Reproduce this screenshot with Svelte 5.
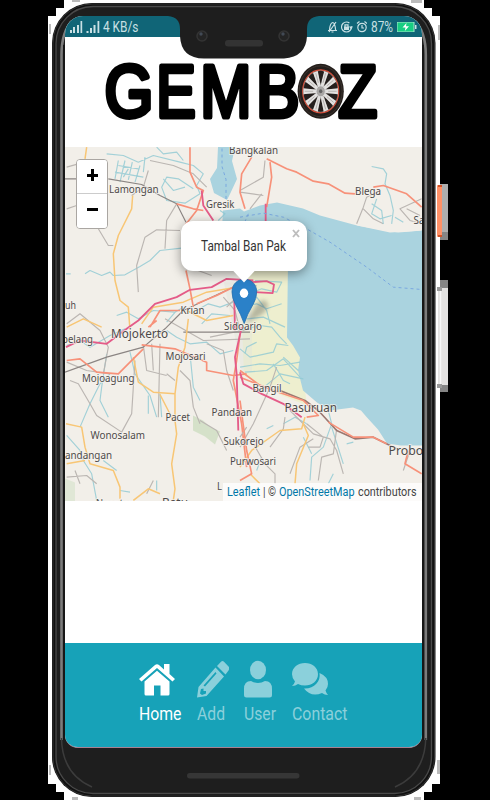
<script>
  const places = [
    ['Bangkalan', 229, 153.5, 49, 10.5], ['Lamongan', 109, 192, 49.5, 11], ['Gresik', 206, 207, 28.5, 11],
    ['Blega', 355, 194.5, 26, 11], ['Sampang', 413.5, 223, 44, 11], ['uh', 65, 308, 11, 11],
    ['Krian', 180.5, 313, 24, 11], ['Sidoarjo', 224, 329.2, 38, 11], ['Mojokerto', 111, 337.5, 57, 13],
    ['Mojosari', 165.5, 359.5, 40, 10.5], ['pelang', 62, 342, 31, 11], ['Mojoagung', 82, 381.5, 52.5, 11],
    ['Pacet', 165.5, 420.5, 24.5, 11], ['Pandaan', 211.5, 415.5, 40.5, 11], ['Bangil', 252.5, 391.5, 29, 11],
    ['Pasuruan', 284.5, 411, 52.5, 13], ['Wonosalam', 90.5, 438.8, 54.5, 11], ['Sukorejo', 223.5, 444.7, 40, 11],
    ['Purwosari', 230, 464, 46, 10.5], ['andangan', 65, 458.5, 47, 11], ['Batu', 162, 506, 26, 13],
    ['Ngantang', 96, 506.5, 44, 11], ['L', 217, 489.5, 5, 11], ['Probolinggo', 388.5, 454, 71, 13]
  ];
  const letters = [['G', 104.6, 0.84], ['E', 156.2, 0.79], ['M', 200.3, 0.82], ['B', 256.1, 0.87], ['Z', 338.3, 0.85]];
  const spokes = Array.from({ length: 10 }, (_, i) => i * 36 + 18);
</script>

{#snippet fit(text, width, size, height, baseline)}
  <svg class="fit" {width} {height}>
    <text x="0" y={baseline} font-size={size} textLength={width} lengthAdjust="spacingAndGlyphs">{text}</text>
  </svg>
{/snippet}

<div class="stage">
  <svg class="chassis" viewBox="0 0 490 800">
    <path fill="#fff" d="M64 0H424V8H432V16H440V784H432V792H424V800H64V792H56V784H48V16H56V8H64Z" />
    <path fill="#bbb" d="M72 0h8v2h-8zM49 24h2v10h-2zM411 0h11v3h-11zM438 25h2v15h-2zM49 765h2v10h-2zM72 797h6v3h-6zM414 797h7v3h-7zM437 760h3v14h-3z" />
    <path fill="#aeaeae" d="M440 184h8v56h-8z" /><path fill="#858585" d="M440 232h8v8h-8zM440 280h8v8h-8zM440 384h8v8h-8z" />
    <rect x="437" y="185" width="5" height="52" rx="1" fill="#ff9167" />
    <path d="M438 185h4v2h-4zM438 235h4v2h-4z" fill="#d45225" />
    <path d="M438 288h10v97h-10z" fill="#e3e2e1" /><path d="M440.500 288v97" stroke="#f7f7f7" stroke-width="1.500" />
    <path d="M437 287h5v4h-5zM437 384h5v4h-5z" fill="#999" />
    <rect x="52" y="3" width="383.500" height="794" rx="40" fill="#111" />
    <rect x="53" y="4" width="381.500" height="792" rx="39" fill="none" stroke="#333" />
    <rect x="56" y="6.500" width="375.500" height="787" rx="37" fill="#1e1e1e" stroke="#4a4a4a" stroke-width="1.300" />
    <path d="M61.500 740V55Q61.500 32 72 21M425.800 740V55Q425.800 32 415 21" fill="none" stroke="#7c7c7c" stroke-width="2.600" />
    <path d="M61.500 738Q62 774 92 787M425.800 738Q425 774 395 787" fill="none" stroke="#3c3c3c" stroke-width="1.500" />
    <path d="M64 740V45M423 740V45" stroke="#171717" stroke-width="2" />
    <rect x="187" y="773" width="112.500" height="5.500" rx="2.700" fill="#363636" />
  </svg>

  <main class="screen">
    <header class="status">
      <div class="signals">
        <svg width="31" height="12" viewBox="0 0 31 12"><path fill="#c9e0e4" d="M1 9h2v3H1zM4 6h2v6H4zM8 4h2v8H8zM11.500 0h1.700v12h-1.700zM17.500 10h2v2h-2zM21 7h2v5h-2zM24.500 4h2v8h-2zM28.500 0h1.800v12h-1.800z" /></svg>
        {@render fit('4 KB/s', 35.5, 14.300, 16, 13)}
      </div>
      <div class="indicators">
        <svg width="39" height="12" viewBox="0 0 39 12" fill="none" stroke="#c9e0e4" stroke-width="1.200">
          <path d="M0 9.500h9M1.500 9Q2 2 4.800 1.500Q7 2 7.600 9M3.500 11h2M1 11 8 1" />
          <circle cx="18.500" cy="6" r="5" stroke-dasharray="26 4" /><path fill="#c9e0e4" stroke="none" d="M16 5.500h5v3.500h-5zM21 5.500h4l-2 3z" /><path d="M17 6V3.800h3V6" />
          <circle cx="34" cy="6.500" r="4.200" /><path d="M29 2.500 31.500.500M39 2.500 36.500.500M34 4v3h2" />
        </svg>
        {@render fit('87%', 22, 14.300, 16, 13)}
        <svg width="20" height="10" viewBox="0 0 20 10"><path d="M0 0h17v10H0z" fill="#17ce82" stroke="#a7e5cd" /><path d="M18 3h1.500v4H18z" fill="#c9e0e4" /><path fill="#fff" d="M9.500 1 5.500 5.500h3L7.800 9 12 4.300H9z" /></svg>
      </div>
    </header>

    <section class="brand">
      <svg width="356.500" height="109.500" viewBox="65 37 356.500 109.500">
        {#each letters as [letter, x, s]}
          <text transform="translate({x} 117) scale({s} 1)" class="letter">{letter}</text>
        {/each}
        <g transform="translate(320.700 91.300) scale(.84 1)">
          <circle r="27.500" fill="#241e1b" />
          <circle r="25.500" fill="none" stroke="#3d3530" stroke-width="1" />
          <circle r="21.500" fill="#817c79" stroke="#d4503c" stroke-width="1.300" />
          {#each spokes as a}
            <path transform="rotate({a + 18})" d="M0-7-4-19.500Q0-21.500 4-19.500Z" fill="#241f1d" />
            <path transform="rotate({a})" d="M-1.500-4-3-20.500H3L1.500-4Z" fill="#e3e2e0" />
            <path transform="rotate({a})" d="M0-9V-19" stroke="#a19c99" stroke-width=".7" />
          {/each}
          <circle r="5.500" fill="#a8a6a4" stroke="#ddd" /><circle r="2" fill="#666" />
        </g>
      </svg>
    </section>

    <section class="map">
      <svg width="356.500" height="354.500" viewBox="65 146.500 356.500 354.500">
        <rect x="65" y="146" width="357" height="356" fill="#f2efe9" />
        <path fill="#eeefcf" d="M240 270h50v65l15 22-2 18 4 30-25-10-38-20Z" />
        <path fill="#e0e4da" d="M224 282h28v90h-10z" opacity=".45" />
        <path fill="#cbdcbd" opacity=".75" d="M193 415l10 5 8 7 9 4-5 13-10-8-12-6Z" />
        <path fill="#d9e4cd" opacity=".7" d="M65 478l10 4v19H65z" />
        <path fill="#aad3df" d="M218 146.500h17l-3 14 5 18-7 15-3 6-13-7-4-14 7-11ZM223 210l17-2 4 3 16-6 17-3 26 6 17 7 37 10 33 7 32-2V445L401 445 387 443 378 429 367 417 361 410 353 407 330 410 317 402 303 390 300 378 298 370 300 357 293 345 287 337 288 262H220Z" />
        <path fill="#f2efe9" d="M357 225l9-22 14-4 41 3V230l-10 1-13 1-7-1Z" />
        <g transform="translate(60 140) scale(.3333)" fill="none" stroke-linejoin="round">
          <g class="stream">
            <path d="M140 40 190 45 235 65 280 45 360 65 400 75 430 100 410 135 420 160 375 188 320 180 305 140 320 110 355 115 400 145M175 60 165 115M195 60 180 125M217 65 205 118M240 75 225 125M255 50 250 95M175 75 235 85M165 95 250 110M290 20 310 40 350 35 370 60" />
            <path d="M75 400 90 390 125 405 150 395 160 405 195 403 240 378 270 360 300 330 365 323M18 400H32M190 110 205 85M310 115 340 150 375 140M480 210 495 220 475 240" />
            <path d="M170 525 200 515 235 535 280 510 345 515 370 500M400 515 445 490 480 500 520 485M425 550 455 520 510 525M320 545 350 510" />
            <path d="M320 570 350 590 390 610 440 605 480 640 520 630M20 615 60 600 90 620 150 585 195 565M140 640 125 740 120 780 145 830M60 860 90 790 120 730 150 700M210 635 225 700 270 765 290 830M265 765V820M300 760 305 830M390 640 400 740 420 780M20 885 60 930 70 960 95 1000 110 1080M290 1020V1050M130 960 170 990M180 1050 210 1055" />
          </g>
          <g class="minor">
            <path d="M55 110 80 135 50 195 20 205M265 90 250 140 215 165M270 60 340 75 400 100 440 140M315 325 320 240 350 190M235 455 230 375 255 290 290 268 360 270M115 265 145 315H160M20 80 55 70M400 385 455 405M20 550 60 520 120 570 145 620 130 700M250 615 260 690 320 705M275 610 280 690M300 610 295 830M315 535 430 600 570 595M360 690 390 720 400 800 420 850M225 660 215 820 185 875 110 825 90 790 55 730 30 720M345 720 320 700M440 610 490 630 500 690 520 750M450 590 570 565M20 665 80 690 150 700M20 1010 80 1005 110 1030M420 840 470 870 500 930M500 500 540 460 590 435M490 470 525 510 540 570M280 1020 260 1060M45 990 60 1030" />
            <path stroke="#8b8583" d="M15 115H50M145 115 245 132 300 165 350 190 378 245M15 695 140 650 250 620 315 565 370 510 530 435M370 575 570 575" />
          </g>
          <g class="yellow">
            <path d="M80 20 75 55M218 165 215 205 175 285 160 340 165 420 180 480 205 500 210 570M20 560 70 535 125 560M245 550 280 500 370 485 440 455 530 440M385 535 375 620 355 680 345 760 345 840 350 880 335 970 345 1045 340 1080M220 650 235 725 280 755 345 760M300 762 340 840M18 850 65 860 75 920 90 970 160 990 180 1040 180 1075M220 1080 265 1045 300 1060M380 510 440 540 520 525M20 970 75 960" />
          </g>
          <g class="red">
            <path d="M390 20V95L410 140 430 150 410 210 375 255M350 190 400 205 430 210M378 390 390 445 400 500M410 490 470 465 530 435M270 560 300 510 360 510M250 625 210 665 175 700 110 695 60 655 20 660M265 560 290 540M245 613 345 625 440 665 440 690 520 705 560 700M540 580 530 660 520 720 545 850 560 980" />
          </g>
          <g class="pink"><path d="M425 150 430 195 460 240M18 620 60 600 140 610 200 565 235 540 285 490 350 470 390 448 455 440 500 415 580 420M522 440 525 570M545 560 525 650 530 700 535 870" /></g>
        </g>
        <g transform="translate(240 140) scale(.3333)" fill="none" stroke-linejoin="round">
          <g class="minor"><path d="M75 60 70 110 0 150M0 155 70 165M30 205 65 160M350 250 370 200 380 170 420 150M370 205 400 235 430 250M545 175 480 205 510 240 545 250M500 205 540 225" /></g>
          <g class="stream"><path d="M395 78 430 85 440 100 435 130 450 165 460 210 455 250M410 175 395 220 420 235 455 225M395 190 425 210 430 250M465 230 490 245M45 420 125 425 110 455 65 445 40 455M0 500 50 490 80 505 125 490M50 470 80 510 90 550M20 535 70 530 135 560" /></g>
          <g class="red"><path d="M80 55 140 85 170 95 220 122 265 130 315 158 345 160M400 140 430 135 500 160 545 200M35 50 5 100 0 155 15 205M90 65 95 110 80 200" /></g>
          <g class="pink"><path d="M77 190V242M35 425 80 422 102 432 98 458 45 455" /></g>
          <path class="ferry" d="M0 230 70 218 130 230 200 265 270 305 380 380 460 440 545 447M25 220 15 243" />
        </g>
        <path class="ferry" d="M222 148V166L226 179V206" fill="none" />
        <g transform="translate(240 320) scale(.3333)" fill="none" stroke-linejoin="round">
          <g class="stream"><path d="M0 30 60 15 95 20 120 50 140 70M0 85 30 110 100 95 110 70 145 75M0 140 60 130 120 135 180 125M15 155 80 150 130 115 180 170M50 65 20 80 15 100M100 130 130 180 150 190M130 110 175 150M60 210 120 160 190 175M260 250 275 310 250 380 215 410 210 480M275 320 310 430M130 310 165 290 200 310M190 350 215 400M65 410 50 450M80 325 100 315M320 370l20-5M280 460 265 490" /></g>
          <g class="minor"><path d="M0 380 40 310 90 200 110 140M20 320 0 350M40 370 75 430 105 460V490M90 380 130 325 135 290M150 270 220 340 270 355 290 390 310 460M200 310 250 350 240 380 205 380M290 325 280 400 245 410 235 480M150 460 180 380 220 355M490 450 510 390" /><path stroke="#9b7770" stroke-width="5" d="M120 210 195 240 235 270 290 330 345 355 400 350 470 385" /></g>
          <g class="yellow"><path d="M0 440 35 390 120 330 185 325 195 290M190 310 205 345 170 430 165 490M30 460 60 490" /></g>
          <g class="red"><path d="M0 170 100 210 190 240 235 285 200 290M265 305 340 350 400 350 440 370M505 390 495 430 545 460M0 150 60 195M0 240 20 390 35 460 0 480" /></g>
          <g class="pink"><path d="M0 155 10 190 65 220 130 250 185 290" /></g>
        </g>
        {#each places as [name, x, y, w, size]}
          <text class="place" {x} {y} font-size={size} textLength={w} lengthAdjust="spacingAndGlyphs">{name}</text>
        {/each}
        <g class="pin">
          <path d="M246 322 257 303Q267 296 268 306Q265 315 246 322" fill="#333" opacity=".3" filter="blur(2px)" />
          <path d="M244.200 323Q241 314 235.500 304Q232 298 232 291.500C232 274.500 256.700 274.500 256.700 291.500Q256.700 298 253 304Q247 314 244.200 323Z" fill="#2b81c8" stroke="#2470ae" stroke-width=".8" />
          <ellipse cx="244" cy="292.700" rx="4.200" ry="4.700" fill="#fff" />
        </g>
      </svg>
      <div class="zoom"><button aria-label="Zoom in"><i></i><i class="up"></i></button><button aria-label="Zoom out"><i></i></button></div>
      <div class="popup">{@render fit('Tambal Ban Pak', 85, 13.800, 20, 14.500)}<svg class="close" width="8" height="9"><path d="M1 1 7 8M7 1 1 8" stroke="#bdbdbd" stroke-width="1.900" /></svg></div>
      <div class="credit">
        <span class="link">{@render fit('Leaflet', 33, 12.300, 16, 12.500)}</span>
        {@render fit('| ©', 13, 12.300, 16, 12.500)}
        <span class="link">{@render fit('OpenStreetMap', 75.500, 12.300, 16, 12.500)}</span>
        {@render fit('contributors', 58.500, 12.300, 16, 12.500)}
      </div>
    </section>

    <nav>
      <a class="active" href="#home"><svg width="36" height="38" viewBox="0 0 36 38"><path fill="currentColor" d="M0 19 16 5Q18 3.500 20 5L25 9.500V4H30.500V14L36 19 33.500 21.500 18 8 2.500 21.500ZM5.500 21.500 18 10.800 30.500 21.500V34Q30.500 35.500 29 35.500H21.500V25.500H15V35.500H7Q5.500 35.500 5.500 34Z" /></svg>{@render fit('Home', 42.500, 17.500, 22, 17)}</a>
      <a href="#add"><svg width="32" height="38" viewBox="0 0 32 38"><path fill="currentColor" fill-rule="evenodd" d="M0 37.500 1.500 27 18.500 7.500 27 16.500 9.500 36ZM4 29 3 33.500 5 35 9 33.500V31H6.500V28.500ZM8 26.500 19.500 13.500 18.500 12 6.500 25.500ZM20 6 24 1.700Q25.500.500 27 1.800L31.500 6.500Q33 8 31.500 10.500L28.500 14.500Z" /></svg>{@render fit('Add', 28, 17.500, 22, 17)}</a>
      <a href="#user"><svg width="28" height="38" viewBox="0 0 28 38"><ellipse cx="14" cy="10" rx="8" ry="9.300" fill="currentColor" /><path fill="currentColor" d="M0 35V29Q0 21 7 21Q14 25 21 21Q28 21 28 29V35Q28 37.500 25.500 37.500H2.500Q0 37.500 0 35Z" /></svg>{@render fit('User', 32, 17.500, 22, 17)}</a>
      <a href="#contact"><svg width="36" height="38" viewBox="0 0 36 38"><path fill="currentColor" d="M13 3C20 3 26 7.500 26 14.200S20 25.500 13 25.500Q9 25.500 6 24Q3.500 26 0 26Q2.500 23.500 3 21.500Q0 18 0 14.200C0 7.500 6 3 13 3ZM27.500 13Q36 16.500 36 24Q36 27.500 33.500 30.500Q34 32.500 36 35Q32.500 35 30 33Q19 37.500 12 28.500C22 29 29 21.500 27.500 13Z" /></svg>{@render fit('Contact', 55.500, 17.500, 22, 17)}</a>
    </nav>
  </main>

  <svg class="notch" width="151" height="43" viewBox="168 16 151 43">
    <path fill="#1e1e1e" d="M168 16Q180 17 180 29V36Q181 58.500 204 58.500H284Q306 57 307 36V29Q307 17 319 16Z" />
    <rect x="225" y="40" width="38" height="6.500" rx="3" fill="#333" />
    <g fill="#242424" stroke="#343434" stroke-width="1.500"><circle cx="202" cy="36" r="5" /><circle cx="284" cy="36" r="5" /></g>
    <g fill="#424a55"><circle cx="201" cy="34" r="1.700" /><circle cx="283" cy="34" r="1.700" /></g>
  </svg>
</div>

<style>
  :global(body) { background: #000; overflow: hidden; }
  .stage { position: relative; box-sizing: border-box; width: 490px; height: 800px; padding: 16px 0 0 65px; background: #000; font-family: Roboto, 'Liberation Sans', sans-serif; }
  svg { display: block; flex: none; }
  .chassis { position: absolute; inset: 0; width: 490px; height: 800px; }
  .screen { position: relative; display: flex; flex-direction: column; box-sizing: border-box; width: 356.5px; height: 731.5px; background: #fff; border-bottom: 1px solid #a98191; border-radius: 18px 18px 13px 13px; overflow: hidden; }
  .status { display: flex; justify-content: space-between; box-sizing: border-box; height: 21px; padding: 0 5px 0 4px; background: #106577; }
  .signals, .indicators { display: flex; align-items: center; gap: 3px; }
  .indicators { gap: 4px; }
  .fit { overflow: visible; fill: currentColor; }
  .status .fit { color: #c9e0e4; }
  .brand { height: 109.5px; flex: none; }
  .letter { font: 75px 'Liberation Sans', Arial, sans-serif; fill: #000; stroke: #000; stroke-width: 5px; stroke-linejoin: round; }
  .map { position: relative; height: 354.5px; flex: none; overflow: hidden; }
  .stream { stroke: #8fc9d3; stroke-width: 3.5; opacity: .8; }
  .minor { stroke: #bbb6b2; stroke-width: 3.5; }
  .yellow { stroke: #f8c675; stroke-width: 4.5; }
  .red { stroke: #f79179; stroke-width: 5; }
  .pink { stroke: #e45b88; stroke-width: 5.5; }
  .ferry { stroke: #79a8df; stroke-width: 3; stroke-dasharray: 9 9; }
  .map > svg > .ferry { stroke-width: 1; stroke-dasharray: 3 3; }
  .place { font-family: 'Noto Sans', sans-serif; fill: #4d4a49; stroke: #f6f3ef; stroke-width: 1.8px; stroke-opacity: .75; paint-order: stroke; }
  .zoom { position: absolute; left: 11px; top: 12.5px; width: 30px; border: 1.5px solid #aaa6a2; border-radius: 4px; background: #fff; overflow: hidden; }
  .zoom button { position: relative; display: flex; align-items: center; justify-content: center; width: 100%; height: 34px; padding: 0 0 3px; border: 0; background: #fff; }
  .zoom button:first-child { border-bottom: 1px solid #ccc; }
  .zoom i { width: 11px; height: 3px; background: #000; }
  .zoom .up { position: absolute; width: 3px; height: 12px; }
  .popup { position: absolute; left: 116px; top: 74px; box-sizing: border-box; width: 126px; height: 50px; padding: 15px 20px; border-radius: 12px; background: #fff; color: #333; box-shadow: 0 3px 11px rgba(0, 0, 0, .4); }
  .popup::after { content: ''; position: absolute; left: 51px; top: 49px; width: 24px; height: 13px; background: #fff; clip-path: polygon(0 0, 100% 0, 50% 100%); }
  .close { position: absolute; right: 7px; top: 8px; }
  .credit { position: absolute; right: 0; bottom: 0; display: flex; gap: 3.2px; box-sizing: border-box; width: 199px; height: 18px; padding-left: 4.5px; background: rgba(255, 255, 255, .75); color: #444; }
  .link { color: #0078a8; }
  nav { display: flex; gap: 15.6px; box-sizing: border-box; height: 104px; margin-top: auto; padding: 17.5px 0 0 73.7px; background: #17a2b8; flex: none; }
  nav a { color: #8bd0db; text-decoration: none; display: flex; flex-direction: column; gap: 4.7px; }
  nav a.active { color: #fff; }
  .notch { position: absolute; left: 168px; top: 16px; }
</style>
